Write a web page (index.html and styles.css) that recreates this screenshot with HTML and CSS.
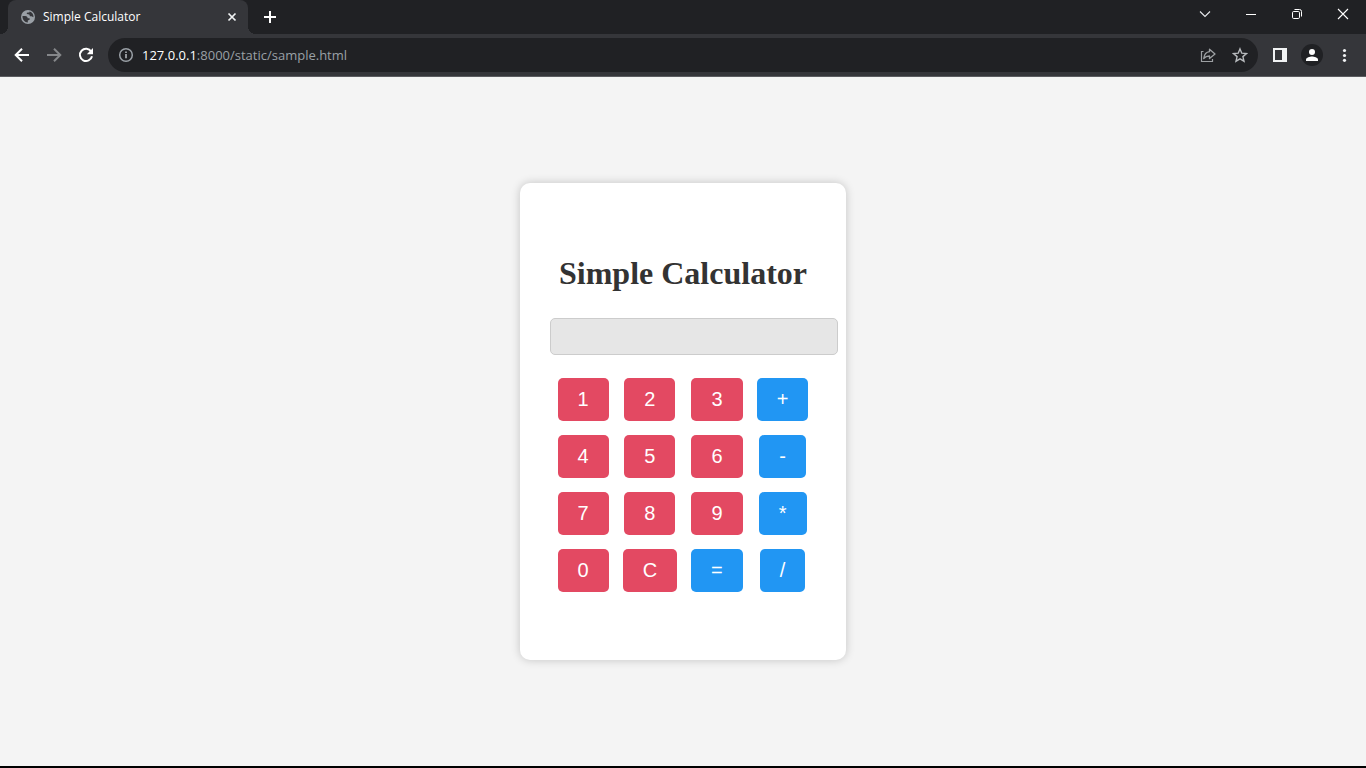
FILE: index.html
```html
<!DOCTYPE html>
<html lang="en">
<head>
<meta charset="utf-8">
<meta name="viewport" content="width=device-width, initial-scale=1">
<title>Simple Calculator</title>
<link rel="stylesheet" href="styles.css">
</head>
<body>
<header class="browser">
  <div class="tab-strip">
    <div class="tab">
      <svg class="favicon" viewBox="0 0 14 14" width="14" height="14" aria-hidden="true"><circle cx="7" cy="7" r="7" fill="#9aa0a6"/><path d="M1.500 6H4.200C5.400 6 6.600 6.800 6.700 8.200H8.600V9.800L6.800 10.500V12.500C3.600 12.400 1.300 9.600 1.500 6ZM8.600 1.600L8.300 2.600H6.800C5.800 2.700 5.500 3.300 6 4L8.300 4.600 9 6.200H10.500L12.500 7.200C12.700 4.500 11 2.300 8.600 1.600Z" fill="#35363a"/></svg>
      <span class="tab-title">Simple Calculator</span>
      <button class="tab-close" type="button" aria-label="Close tab"><svg viewBox="0 0 10 10" width="10" height="10"><path d="M1.500 1.500l7 7M8.500 1.500l-7 7" stroke="#f1f3f4" stroke-width="1.700" fill="none"/></svg></button>
    </div>
    <button class="new-tab" type="button" aria-label="New tab"><svg viewBox="0 0 12 12" width="12" height="12"><path d="M6 0v12M0 6h12" stroke="#fff" stroke-width="2"/></svg></button>
    <div class="window-controls">
      <button class="window-button" type="button" aria-label="Search tabs"><svg viewBox="0 0 12 12" width="12" height="12"><path d="M1 3.500l5 5 5-5" stroke="#e8eaed" stroke-width="1.100" fill="none"/></svg></button>
      <button class="window-button" type="button" aria-label="Minimize"><svg viewBox="0 0 12 12" width="12" height="12"><path d="M1 6.500h10" stroke="#fff"/></svg></button>
      <button class="window-button" type="button" aria-label="Restore"><svg viewBox="0 0 12 12" width="12" height="12"><rect x="1.500" y="3.500" width="7" height="7" rx="1.200" fill="none" stroke="#fff"/><path d="M3.500 1.500h5a2 2 0 0 1 2 2v5" fill="none" stroke="#fff"/></svg></button>
      <button class="window-button" type="button" aria-label="Close"><svg viewBox="0 0 12 12" width="12" height="12"><path d="M1 1l10 10M11 1L1 11" stroke="#fff" stroke-width="1.100"/></svg></button>
    </div>
  </div>
  <div class="toolbar">
    <div class="toolbar-group">
      <button class="icon-button" type="button" aria-label="Back"><svg viewBox="0 0 16 16" width="16" height="16"><path d="M15 8H2M8 1.700L1.700 8 8 14.300" fill="none" stroke="#fff" stroke-width="2"/></svg></button>
      <button class="icon-button" type="button" aria-label="Forward"><svg viewBox="0 0 16 16" width="16" height="16"><path d="M1 8h13M8 1.700L14.300 8 8 14.300" fill="none" stroke="#85878a" stroke-width="2"/></svg></button>
      <button class="icon-button" type="button" aria-label="Reload"><svg viewBox="0 0 16 16" width="16" height="16"><path d="M13.200 4.600A6.100 6.100 0 1 0 14 9.200" fill="none" stroke="#fff" stroke-width="2"/><path d="M15 1v6.200H8.800Z" fill="#fff"/></svg></button>
    </div>
    <div class="address-bar">
      <button class="icon-button" type="button" aria-label="Site information"><svg viewBox="0 0 16 16" width="16" height="16"><circle cx="8" cy="8" r="6.300" fill="none" stroke="#9aa0a6" stroke-width="1.500"/><path d="M8 7v4.300M8 4.400v1.700" stroke="#b0b4b8" stroke-width="1.600"/></svg></button>
      <div class="url" role="textbox" contenteditable="true" spellcheck="false" aria-label="Address"><span class="url-host">127.0.0.1</span>:8000/static/sample.html</div>
      <div class="toolbar-group">
        <button class="icon-button" type="button" aria-label="Share"><svg viewBox="0 0 16 16" width="16" height="16"><path d="M3.500 4.500H1.500v10h11v-2.500" fill="none" stroke="#9da0a3" stroke-width="1.200"/><path d="M9.500 2.200L15 7l-5.500 4.500V9C7 9 5.300 9.600 3.700 11.500 4.200 8 6 5 9.500 4.700Z" fill="none" stroke="#9da0a3" stroke-width="1.300" stroke-linejoin="round"/></svg></button>
        <button class="icon-button" type="button" aria-label="Bookmark"><svg viewBox="0 0 16 16" width="16" height="16"><path d="M8 1.900l1.800 4.300 4.700.4-3.600 3 1.100 4.600L8 11.800 4 14.200l1.100-4.600-3.600-3 4.700-.4Z" fill="none" stroke="#b8bbbe" stroke-width="1.400"/></svg></button>
      </div>
    </div>
    <div class="toolbar-group">
      <button class="icon-button" type="button" aria-label="Side panel"><svg viewBox="0 0 14 14" width="14" height="14"><path d="M0 0h14v14H0ZM2 2v10h7V2Z" fill="#f1f3f4" fill-rule="evenodd"/></svg></button>
      <button class="icon-button" type="button" aria-label="Profile"><svg viewBox="0 0 22 22" width="22" height="22"><circle cx="11" cy="11" r="11" fill="#202124"/><circle cx="11" cy="8" r="3" fill="#fff"/><path d="M5 17v-1.500C5 13.500 9 12.500 11 12.500s6 1 6 3V17Z" fill="#fff"/></svg></button>
      <button class="icon-button" type="button" aria-label="Menu"><svg viewBox="0 0 14 14" width="14" height="14"><g fill="#f1f3f4"><circle cx="7.500" cy="2.500" r="1.600"/><circle cx="7.500" cy="7.500" r="1.600"/><circle cx="7.500" cy="12.300" r="1.600"/></g></svg></button>
    </div>
  </div>
</header>
<main class="page">
  <section class="calculator">
    <h1 class="title">Simple Calculator</h1>
    <input class="display" type="text" aria-label="Result" readonly>
    <div class="keys">
      <button class="key" type="button">1</button>
      <button class="key" type="button">2</button>
      <button class="key" type="button">3</button>
      <button class="key operator" type="button">+</button>
      <button class="key" type="button">4</button>
      <button class="key" type="button">5</button>
      <button class="key" type="button">6</button>
      <button class="key operator" type="button">-</button>
      <button class="key" type="button">7</button>
      <button class="key" type="button">8</button>
      <button class="key" type="button">9</button>
      <button class="key operator" type="button">*</button>
      <button class="key" type="button">0</button>
      <button class="key" type="button">C</button>
      <button class="key operator" type="button">=</button>
      <button class="key operator" type="button">/</button>
    </div>
  </section>
</main>
</body>
</html>
```
FILE: styles.css
```css
* {
  box-sizing: border-box;
}

body {
  margin: 0;
  min-height: 100vh;
  display: flex;
  flex-direction: column;
  background: #f4f4f4;
}

button {
  border: 0;
  padding: 0;
  background: none;
  cursor: pointer;
}

svg {
  display: block;
}

.browser {
  color: #fff;
  font-family: "Open Sans", "Noto Sans", sans-serif;
}

.tab-strip {
  display: flex;
  height: 34px;
  padding-left: 8px;
  background: #202124;
}

.tab {
  position: relative;
  display: flex;
  align-items: center;
  gap: 8px;
  width: 240px;
  padding: 0 8px 0 13px;
  border-radius: 8px 8px 0 0;
  background: #35363a;
}

.tab::before,
.tab::after {
  content: "";
  position: absolute;
  bottom: 0;
  width: 8px;
  height: 8px;
}

.tab::before {
  left: -8px;
  background: radial-gradient(circle at 0 0, transparent 8px, #35363a 8px);
}

.tab::after {
  right: -8px;
  background: radial-gradient(circle at 100% 0, transparent 8px, #35363a 8px);
}

.tab-title {
  flex: 1;
  font-size: 12px;
  line-height: 16px;
}

.tab-close {
  display: grid;
  place-items: center;
  width: 16px;
  height: 16px;
}

.new-tab {
  display: grid;
  place-items: center;
  width: 28px;
  margin-left: 8px;
}

.window-controls {
  display: flex;
  height: 28px;
  margin-left: auto;
}

.window-button {
  display: grid;
  place-items: center;
  width: 46px;
}

.toolbar {
  display: flex;
  align-items: center;
  gap: 8px;
  padding: 4px 8px;
  border-bottom: 1px solid #5b5c60;
  background: #35363a;
}

.toolbar-group {
  display: flex;
  gap: 4px;
}

.icon-button {
  display: grid;
  place-items: center;
  width: 28px;
  height: 28px;
}

.address-bar {
  flex: 1;
  display: flex;
  align-items: center;
  gap: 2px;
  height: 34px;
  padding: 0 4px;
  border-radius: 17px;
  background: #202124;
}

.url {
  flex: 1;
  color: #9aa0a6;
  font-size: 13px;
  line-height: 20px;
  outline: none;
}

.url-host {
  color: #fff;
}

.page {
  flex: 1;
  display: flex;
  align-items: center;
  justify-content: center;
  border-bottom: 2px solid #000;
}

.calculator {
  padding: 72px 30px 68px;
  border-radius: 10px;
  background: #fff;
  box-shadow: 0 0 10px rgba(0, 0, 0, 0.2);
}

.title {
  margin: 0 0 27px;
  color: #333;
  font-family: "Liberation Serif", "Times New Roman", serif;
  font-size: 32px;
  font-weight: bold;
  line-height: 36px;
  text-align: center;
}

.display {
  display: block;
  box-sizing: content-box;
  width: 100%;
  height: 15px;
  margin: 0 0 23px;
  padding: 10px;
  border: 1px solid #ccc;
  border-radius: 5px;
  background: #e6e6e6;
  font: 13px "Liberation Sans", Arial, sans-serif;
  outline: none;
}

.keys {
  display: grid;
  grid-template-columns: repeat(4, auto);
  justify-items: center;
  gap: 14px;
  padding: 0 8px;
}

.key {
  padding: 10px 20px;
  border-radius: 5px;
  background: #e34962;
  color: #fff;
  font-family: "Liberation Sans", Arial, sans-serif;
  font-size: 20px;
  line-height: 23px;
}

.operator {
  background: #2196f3;
}
```
